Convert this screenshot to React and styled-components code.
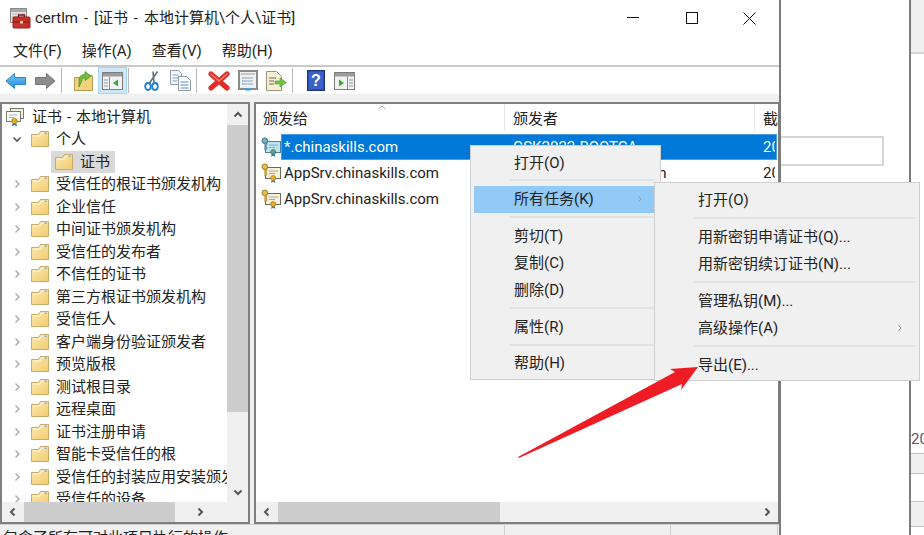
import React from "react";
import styled, { createGlobalStyle } from "styled-components";

const Global = createGlobalStyle`
  html, body { margin: 0; padding: 0; background: #fff; overflow: hidden; }
  #root { width: 924px; height: 535px; }
  * { box-sizing: border-box; }
`;
const FONT = `"Roboto", "Noto Sans CJK SC", sans-serif`;

const Page = styled.div`
  position: relative; display: flex; width: 924px; height: 535px; overflow: hidden;
  background: #fff; color: #222; font: 15px/20px ${FONT};
`;
const Win = styled.div`
  display: flex; flex-direction: column; flex: none; width: 781px; height: 535px;
  border-right: 2px solid #7b7b7b;
`;
const TitleBar = styled.div`display: flex; align-items: center; height: 36px; padding-left: 10px; flex: none;`;
const TitleText = styled.div`margin-left: 4px; flex: 1; white-space: nowrap; word-spacing: 2.2px;`;
const WinCtl = styled.div`display: flex; width: 58.3px; height: 36px; align-items: center; justify-content: center;`;
const MenuBar = styled.div`
  display: flex; gap: 20px; height: 31px; flex: none; padding: 5px 0 0 13px; align-items: flex-start;
  border-bottom: 2px solid #c9c9c9;
`;
const MenuLabel = styled.div`white-space: nowrap;`;
const Toolbar = styled.div`display: flex; height: 27px; flex: none; padding-left: 2px; align-items: center;`;
const Tool = styled.div`
  display: flex; width: 28.8px; height: 27px; align-items: center; justify-content: center; flex: none;
  ${p => p.$active && `background: #cde8fb; box-shadow: inset 0 0 0 1px #a8d6f7;`}
`;
const ToolSep = styled.div`width: 1px; height: 25px; margin: 0 8px 0 1px; background: #b9b9b9; flex: none;`;
const Panes = styled.div`
  display: flex; flex: 1; min-height: 0; gap: 4px; padding-top: 8px; background: #f0f0f0;
`;
const Panel = styled.div`
  display: grid; height: 100%; flex: none; width: ${p => p.$w}px; background: #fff;
  border: 2px solid #7f7f7f; border-right-width: ${p => p.$rb ?? 2}px;
  grid-template-columns: ${p => p.$cols}; grid-template-rows: minmax(0, 1fr) 20px;
  overflow: hidden;
`;
const Tree = styled.div`overflow: hidden; padding-top: 1.500px; word-spacing: 1.2px;`;
const TreeRow = styled.div`
  display: flex; align-items: center; height: 22.5px; white-space: nowrap;
  padding-left: ${p => p.$indent}px;
`;
const Expander = styled.div`display: flex; width: 15px; margin: 0 7px 0 7px; flex: none; justify-content: center;`;
const TreeSel = styled.div`
  display: flex; align-items: center; gap: 7px; height: 22.5px; width: 64px; padding-left: 4px;
  background: #d9d9d9;
`;
const TreeLabel = styled.span`margin-left: 7px;`;
const VScroll = styled.div`display: flex; flex-direction: column; background: #f0f0f0; grid-row: 1; grid-column: 2;`;
const ScrollBtn = styled.div`
  display: flex; align-items: center; justify-content: center; flex: none;
  ${p => p.$h ? `width: ${p.$w || 22}px; height: 100%;` : `height: 21px; width: 100%;`}
`;
const VThumb = styled.div`height: 287px; background: #cdcdcd; flex: none;`;
const Grow = styled.div`flex: 1;`;
const HScroll = styled.div`display: flex; background: #f0f0f0; grid-row: 2; grid-column: 1 / -1; height: 20px;`;
const HThumb = styled.div`height: 100%; width: ${p => p.$w}px; background: #cdcdcd; flex: none;`;
const ListWrap = styled.div`grid-row: 1; grid-column: 1; overflow: hidden;`;
const Header = styled.div`display: flex; height: 27px; white-space: nowrap; margin-bottom: 3px;`;
const HeadCell = styled.div`
  position: relative; flex: none; width: ${p => p.$w}px; padding: 5px 0 0 ${p => p.$pad}px;
  border-right: 1px solid #e5e5e5; overflow: hidden;
`;
const SortMark = styled.svg`position: absolute; left: 121px; top: 0px;`;
const Row = styled.div`display: flex; height: 26px; padding-left: 5px; align-items: center; white-space: nowrap;`;
const RowIcon = styled.div`width: 20px; flex: none; display: flex; align-items: center;`;
const RowBody = styled.div`
  display: flex; flex: 1; height: 26px; align-items: center; margin-right: 1px;
  ${p => p.$sel && `background: #0078d7; color: #fff; box-shadow: inset 0 0 0 1px #4a9fe4;`}
`;
const Cell = styled.div`flex: none; width: ${p => p.$w}px; padding-left: ${p => p.$pad}px; overflow: hidden;`;
const Status = styled.div`
  display: flex; height: 11px; flex: none; overflow: hidden; background: #f0f0f0; white-space: nowrap;
  border-top: 1px solid #d0d0d0; line-height: 18px;
`;
const StatusCell = styled.div`flex: none; width: ${p => p.$w}px; padding: 4px 0 0 ${p => p.$pad || 0}px; border-right: 1px solid #d0d0d0; overflow: hidden;`;
const Middle = styled.div`width: 130px; flex: none; height: 535px; border-right: 2px solid #7b7b7b; padding-top: 136px;`;
const GhostInput = styled.div`width: 103px; height: 30px; border: 2px solid #d6d6d6; border-left: none;`;
const Strip = styled.div`flex: 1; display: flex; flex-direction: column; background: #fff; overflow: hidden;`;
const StripTop = styled.div`height: 54px; flex: none; background: #f0f0f0; border-bottom: 2px solid #d4d4d4;`;
const StripText = styled.div`margin-top: 375px; height: 24px; line-height: 20px; color: #556; white-space: nowrap;`;
const StripBand = styled.div`flex: none; height: ${p => p.$h}px; background: ${p => p.$fill}; border-top: 1px solid #c4c4c4;`;

const CtxMenu = styled.div`
  position: absolute; left: ${p => p.$x}px; top: ${p => p.$y}px; width: ${p => p.$w}px; height: ${p => p.$h}px;
  padding: ${p => p.$pad}; background: #f0f0f0; border: 1px solid #cfcfcf; white-space: nowrap;
`;
const CtxItem = styled.div`
  position: relative; display: flex; align-items: center; height: 27px; padding-left: ${p => p.$left}px;
  ${p => p.$hot && `background: #91c9f7;`}
`;
const CtxSep = styled.div`height: ${p => p.$h}px; padding: 3px 0 0 ${p => p.$left}px;
  &::before { content: ""; display: block; height: 2px; background: #e2e2e2; }
`;
const CtxMore = styled.svg`position: absolute; right: ${p => p.$r}px; top: 9px;`;
const Arrow = styled.svg`position: absolute; left: 510px; top: 360px; pointer-events: none;`;

const Chev = ({ d, color = "#666", w = 1.6, s = 12 }) => (
  <svg width={s} height={s} viewBox="0 0 12 12">
    <path d={d} fill="none" stroke={color} strokeWidth={w} />
  </svg>
);
const CH = {
  down: "M2.5 4.5 6 8l3.5-3.5", right: "M4.5 2.5 8 6 4.5 9.5",
  up: "M2.5 7.5 6 4l3.5 3.5", left: "M7.5 2.5 4 6l3.5 3.5",
};

const Folder = () => (
  <svg width="18" height="16" viewBox="0 0 18 16" style={{ flex: "none" }}>
    <defs>
      <linearGradient id="fold" x1="0" y1="0" x2="1" y2="1">
        <stop offset="0" stopColor="#fbe8b0" />
        <stop offset="1" stopColor="#f2cc70" />
      </linearGradient>
    </defs>
    <path d="M.5 3.5h7l2-3h8v15H.5z" fill="url(#fold)" stroke="#c9ab68" />
    <path d="M2 5h7l2-3h5" fill="none" stroke="#fff7dc" />
    <rect x="13.5" y="1.5" width="2" height="1.5" fill="#6fa7d8" />
  </svg>
);
const RootCert = () => (
  <svg width="20" height="20" viewBox="0 0 20 20">
    <rect x="5.5" y="1.5" width="13" height="10" fill="#f3eee0" stroke="#77766f" />
    <rect x="1.5" y="4.5" width="14" height="10" fill="#fbfaf4" stroke="#77766f" />
    <path d="M4 8h8M4 10.500h5" stroke="#9db6cf" />
    <path d="M8 15l-1 4.500 2.500-1.500 2.500 1.500-1-4.500z" fill="#2f6fc0" />
    <circle cx="9.500" cy="14" r="2.800" fill="#e2ab2c" stroke="#a47816" strokeWidth=".6" />
  </svg>
);
const CertIcon = ({ sel }) => (
  <svg width="20" height="20" viewBox="0 0 20 20">
    <rect x="4.500" y="4.500" width="15" height="11" fill={sel ? "#bfe3ee" : "#f6f0dc"} stroke={sel ? "#4b7f97" : "#6e6a5a"} />
    <path d="M8 8h9M8 10.500h6" stroke={sel ? "#7fb3c9" : "#b0a98f"} />
    <circle cx="3.800" cy="3.800" r="2.800" fill={sel ? "#79b3c4" : "#e9bf4f"} stroke={sel ? "#3c7086" : "#9c7a20"} />
    <path d="M3.800 6v7l2-1v-2l-1-1 1-1V6z" fill={sel ? "#6ea5b8" : "#dcae3d"} stroke={sel ? "#3c7086" : "#9c7a20"} strokeWidth=".6" />
    <path d="M11 16l-1 4 2.200-1.200 2.200 1.200-1-4z" fill="#2f78c4" />
    <circle cx="12.200" cy="15" r="2.600" fill={sel ? "#5c9e8c" : "#e2ab2c"} stroke={sel ? "#3d7264" : "#a47816"} strokeWidth=".6" />
  </svg>
);
const AppIcon = () => (
  <svg width="21" height="21" viewBox="0 0 21 21" style={{ flex: "none" }}>
    <rect x="0.500" y="0.500" width="16" height="14" fill="#e4e4e4" stroke="#8a8a8a" />
    <rect x="1" y="1" width="15" height="3" fill="#a9a9a9" />
    <path d="M2 6h13M2 9h13" stroke="#b5b5b5" />
    <rect x="3" y="9" width="17" height="11" rx="1" fill="#c8302c" stroke="#94211e" />
    <path d="M3 14h17" stroke="#7e1a18" />
    <path d="M8.500 9V7h6v2" fill="none" stroke="#7e1a18" strokeWidth="1.300" />
    <rect x="10" y="13" width="3" height="2.500" fill="#e9d1a0" />
  </svg>
);
const BackIcon = () => (
  <svg width="22" height="18" viewBox="0 0 22 18">
    <defs><linearGradient id="bk" x1="0" y1="0" x2="0" y2="1"><stop offset="0" stopColor="#7cc8f5" /><stop offset="1" stopColor="#1f88dc" /></linearGradient></defs>
    <path d="M1 9 9.500 1.500V5.500H20.500V12.500H9.500V16.500z" fill="url(#bk)" stroke="#2d86cf" strokeLinejoin="round" />
  </svg>
);
const FwdIcon = () => (
  <svg width="22" height="18" viewBox="0 0 22 18">
    <path d="M21 9 12.500 1.500V5.500H1.500V12.500H12.500V16.500z" fill="#8c8c8c" stroke="#777" strokeLinejoin="round" />
  </svg>
);
const UpIcon = () => (
  <svg width="19" height="21" viewBox="0 0 19 21">
    <path d="M.5 7.500h6l2-2h10v15H.5z" fill="#f1d27e" stroke="#bd9c52" />
    <path d="M5 17V10C5 6 8 4.500 11 4.500V1.500l6 4.500-6 4.500V7.500C8.500 7.500 8 9 8 10.500z" fill="#6fbf3a" stroke="#3f8c1e" strokeWidth=".7" />
  </svg>
);
const PaneIcon = ({ fill = "#3aa83a", right }) => (
  <svg width="21" height="18" viewBox="0 0 21 18">
    <rect x=".5" y=".5" width="20" height="17" fill="#f2f2f2" stroke="#7d7d7d" />
    <rect x="1" y="1" width="19" height="3.500" fill="#9c9c9c" />
    {right ? (
      <g><path d="M5 7.500v7l5-3.500z" fill={fill} /><path d="M13.500 4.500v13" stroke="#8d8d8d" /><path d="M15 8h4M15 11h4M15 14h4" stroke="#7f9ab5" /></g>
    ) : (
      <g><path d="M7.500 4.500v13" stroke="#8d8d8d" /><path d="M2 8h4M2 11h4M2 14h4" stroke="#7f9ab5" /><path d="M16 7.500v7l-5-3.500z" fill={fill} /></g>
    )}
  </svg>
);
const CutIcon = () => (
  <svg width="15" height="20" viewBox="0 0 15 20">
    <path d="M13.500 .5 5.500 12M9 .5 10 12" stroke="#5f6f80" strokeWidth="1.600" fill="none" />
    <ellipse cx="4" cy="15.500" rx="2.800" ry="3.500" fill="none" stroke="#1f7fd6" strokeWidth="1.800" />
    <ellipse cx="11" cy="15.500" rx="2.800" ry="3.500" fill="none" stroke="#1f7fd6" strokeWidth="1.800" />
  </svg>
);
const CopyIcon = () => (
  <svg width="21" height="21" viewBox="0 0 21 21">
    <path d="M.5.500h8l3 3v11H.5z" fill="#f6f8fb" stroke="#8e9aa8" />
    <path d="M2.500 5h6M2.500 8h6M2.500 11h5" stroke="#7aa3cf" />
    <path d="M8.500 6.500h8l4 4v10h-12z" fill="#fdfdfe" stroke="#8e9aa8" />
    <path d="M10.500 12h8M10.500 15h8M10.500 18h8" stroke="#4e8ecb" />
  </svg>
);
const DelIcon = () => (
  <svg width="22" height="20" viewBox="0 0 22 20">
    <path d="M3 3 19 17M19 3 3 17" stroke="#e02f2a" strokeWidth="5.200" strokeLinecap="round" />
    <path d="M3 3 11 10M19 3 11 10" stroke="#f57d6f" strokeWidth="1.500" strokeLinecap="round" />
  </svg>
);
const PropIcon = () => (
  <svg width="20" height="21" viewBox="0 0 20 21">
    <rect x="1" y="1" width="18" height="18" fill="#eef0f2" stroke="#8a8a8a" strokeWidth="2" />
    <rect x="3" y="3" width="14" height="2" fill="#c7c7c7" />
    <path d="M5 8h10M5 11h10M5 14h10" stroke="#8ea2b7" />
    <path d="M4 8h1M4 11h1M4 14h1" stroke="#3d8bd0" />
    <rect x="7" y="18" width="6" height="2.500" fill="#3fa0e0" />
  </svg>
);
const ExportIcon = () => (
  <svg width="21" height="20" viewBox="0 0 21 20">
    <path d="M.5.500h10l5 5v14H.5z" fill="#f7efd3" stroke="#9b9577" />
    <path d="M3 7h7M3 10h5M3 13h5" stroke="#6b6b5c" />
    <path d="M9 10h5V7l6.500 4.500L14 16v-3H9z" fill="#70c24a" stroke="#4d9a2f" strokeWidth=".6" />
  </svg>
);
const HelpIcon = () => (
  <svg width="18" height="21" viewBox="0 0 18 21">
    <rect x=".5" y=".5" width="17" height="20" fill="#2a4fb4" stroke="#1e3480" />
    <rect x="2" y="2" width="14" height="17" fill="#3b62c9" />
    <text x="9" y="16" textAnchor="middle" fontSize="16" fontWeight="700" fontFamily="Liberation Sans, sans-serif" fill="#fff">?</text>
  </svg>
);

const treeItems = [
  "受信任的根证书颁发机构", "企业信任", "中间证书颁发机构", "受信任的发布者", "不信任的证书",
  "第三方根证书颁发机构", "受信任人", "客户端身份验证颁发者", "预览版根", "测试根目录", "远程桌面",
  "证书注册申请", "智能卡受信任的根", "受信任的封装应用安装颁发机构", "受信任的设备",
];

const Sep = ({ h, left }) => <CtxSep $h={h} $left={left} />;
const More = ({ r }) => (
  <CtxMore $r={r} width="6" height="8" viewBox="0 0 6 8"><path d="M1.500 1.500 4 4 1.500 6.500" fill="none" stroke="#999" /></CtxMore>
);

export default function App() {
  return (
    <Page>
      <Global />
      <Win>
        <TitleBar>
          <AppIcon />
          <TitleText>certlm - [证书 - 本地计算机\个人\证书]</TitleText>
          <WinCtl><svg width="12" height="12" viewBox="0 0 12 12"><path d="M0 5.500h12" stroke="#111" /></svg></WinCtl>
          <WinCtl><svg width="12" height="12" viewBox="0 0 12 12"><rect x=".5" y=".5" width="11" height="11" fill="none" stroke="#111" /></svg></WinCtl>
          <WinCtl><svg width="13" height="13" viewBox="0 0 13 13"><path d="M.5.500l12 12M12.500.500l-12 12" stroke="#111" /></svg></WinCtl>
        </TitleBar>
        <MenuBar>
          <MenuLabel>文件(F)</MenuLabel>
          <MenuLabel>操作(A)</MenuLabel>
          <MenuLabel>查看(V)</MenuLabel>
          <MenuLabel>帮助(H)</MenuLabel>
        </MenuBar>
        <Toolbar>
          <Tool><BackIcon /></Tool>
          <Tool><FwdIcon /></Tool>
          <ToolSep />
          <Tool><UpIcon /></Tool>
          <Tool $active><PaneIcon /></Tool>
          <ToolSep />
          <Tool><CutIcon /></Tool>
          <Tool><CopyIcon /></Tool>
          <ToolSep />
          <Tool><DelIcon /></Tool>
          <Tool><PropIcon /></Tool>
          <Tool><ExportIcon /></Tool>
          <ToolSep />
          <Tool><HelpIcon /></Tool>
          <Tool><PaneIcon right /></Tool>
        </Toolbar>
        <Panes>
          <Panel $w={250} $cols="225px 21px">
            <Tree>
              <TreeRow $indent={3}><RootCert /><TreeLabel>证书 - 本地计算机</TreeLabel></TreeRow>
              <TreeRow $indent={0}>
                <Expander><Chev d={CH.down} color="#555" /></Expander><Folder /><TreeLabel>个人</TreeLabel>
              </TreeRow>
              <TreeRow $indent={49}>
                <TreeSel><Folder />证书</TreeSel>
              </TreeRow>
              {treeItems.map(t => (
                <TreeRow $indent={0} key={t}>
                  <Expander><Chev d={CH.right} color="#aaa" w={1.4} /></Expander><Folder /><TreeLabel>{t}</TreeLabel>
                </TreeRow>
              ))}
            </Tree>
            <VScroll>
              <ScrollBtn><Chev d={CH.up} color="#555" w={2} /></ScrollBtn>
              <VThumb />
              <Grow />
              <ScrollBtn><Chev d={CH.down} color="#555" w={2} /></ScrollBtn>
            </VScroll>
            <HScroll>
              <ScrollBtn $h><Chev d={CH.left} color="#555" w={2} /></ScrollBtn>
              <HThumb $w={151} />
              <ScrollBtn $h $w={50}><Chev d={CH.right} color="#555" w={2} /></ScrollBtn>
            </HScroll>
          </Panel>
          <Panel $w={525} $rb={1} $cols="1fr">
            <ListWrap>
              <Header>
                <HeadCell $w={249} $pad={7}>
                  颁发给
                  <SortMark width="10" height="6" viewBox="0 0 10 6"><path d="M1.500 5 5 2l3.500 3" fill="none" stroke="#aaa" /></SortMark>
                </HeadCell>
                <HeadCell $w={250} $pad={8}>颁发者</HeadCell>
                <HeadCell $w={30} $pad={8}>截止日期</HeadCell>
              </Header>
              <Row>
                <RowIcon><CertIcon sel /></RowIcon>
                <RowBody $sel>
                  <Cell $w={224} $pad={3}>*.chinaskills.com</Cell>
                  <Cell $w={250} $pad={8}>GSK2022-ROOTCA</Cell>
                  <Cell $w={20} $pad={8}>2023</Cell>
                </RowBody>
              </Row>
              <Row>
                <RowIcon><CertIcon /></RowIcon>
                <RowBody>
                  <Cell $w={224} $pad={3}>AppSrv.chinaskills.com</Cell>
                  <Cell $w={250} $pad={8}>GSK2022-Identification</Cell>
                  <Cell $w={20} $pad={8}>2023</Cell>
                </RowBody>
              </Row>
              <Row>
                <RowIcon><CertIcon /></RowIcon>
                <RowBody>
                  <Cell $w={224} $pad={3}>AppSrv.chinaskills.com</Cell>
                  <Cell $w={250} $pad={8}>GSK2022-Identification</Cell>
                  <Cell $w={20} $pad={8}>2023</Cell>
                </RowBody>
              </Row>
            </ListWrap>
            <HScroll>
              <ScrollBtn $h><Chev d={CH.left} color="#555" w={2} /></ScrollBtn>
              <HThumb $w={222} />
              <Grow />
              <ScrollBtn $h><Chev d={CH.right} color="#555" w={2} /></ScrollBtn>
            </HScroll>
          </Panel>
        </Panes>
        <Status>
          <StatusCell $w={505} $pad={3}>包含了所有可对此项目执行的操作</StatusCell>
          <StatusCell $w={166} />
          <StatusCell $w={107} />
        </Status>
      </Win>
      <Middle><GhostInput /></Middle>
      <Strip>
        <StripTop />
        <StripText>2023</StripText>
        <StripBand $h={20} $fill="#f0f0f0" />
        <StripBand $h={28} $fill="#fff" />
        <StripBand $h={25} $fill="#f0f0f0" />
        <StripBand $h={9} $fill="#fff" />
      </Strip>

      <CtxMenu $x={470} $y={145} $w={191} $h={235} $pad="3px 6px 0 3px">
        <CtxItem $left={40}>打开(O)</CtxItem>
        <Sep h={9.5} left={35} />
        <CtxItem $left={40} $hot>所有任务(K)<More r={11} /></CtxItem>
        <Sep h={10} left={35} />
        <CtxItem $left={40}>剪切(T)</CtxItem>
        <CtxItem $left={40}>复制(C)</CtxItem>
        <CtxItem $left={40}>删除(D)</CtxItem>
        <Sep h={10} left={35} />
        <CtxItem $left={40}>属性(R)</CtxItem>
        <Sep h={9} left={35} />
        <CtxItem $left={40}>帮助(H)</CtxItem>
      </CtxMenu>
      <CtxMenu $x={654} $y={182} $w={266} $h={199} $pad="3.500px 3px 0 3px">
        <CtxItem $left={40}>打开(O)</CtxItem>
        <Sep h={10} left={35} />
        <CtxItem $left={40}>用新密钥申请证书(Q)...</CtxItem>
        <CtxItem $left={40}>用新密钥续订证书(N)...</CtxItem>
        <Sep h={10} left={35} />
        <CtxItem $left={40}>管理私钥(M)...</CtxItem>
        <CtxItem $left={40}>高级操作(A)<More r={13} /></CtxItem>
        <Sep h={10} left={35} />
        <CtxItem $left={40}>导出(E)...</CtxItem>
      </CtxMenu>

      <Arrow width="200" height="110" viewBox="510 360 200 110">
        <path d="M518 457 675 372 670 369 698 367 681 390 682 384 519 458z" fill="#ee1c25" />
      </Arrow>
    </Page>
  );
}
